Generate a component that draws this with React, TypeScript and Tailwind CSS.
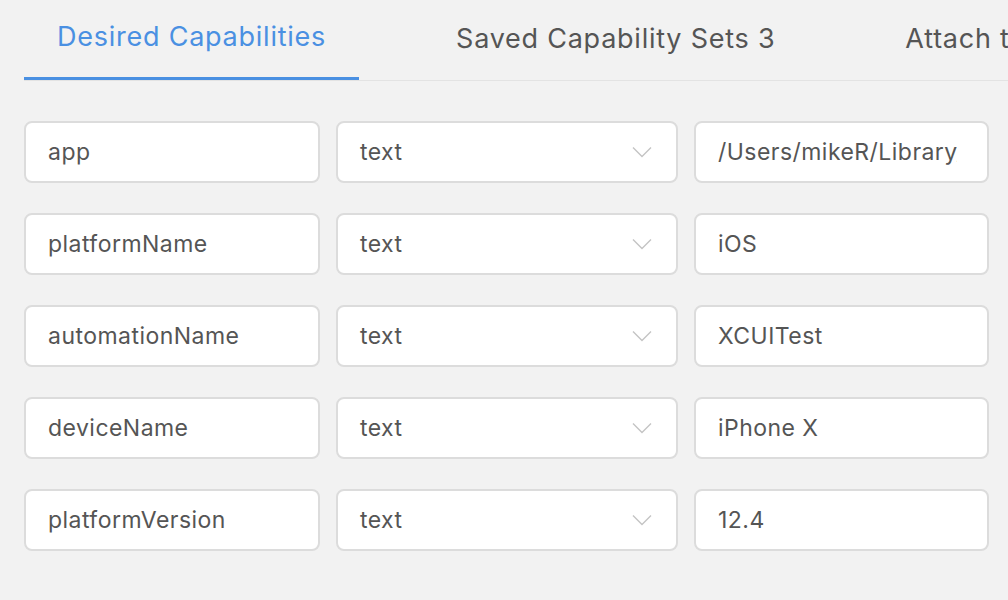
import React from "react";

const rows = [
  { name: "app", type: "text", value: "/Users/mikeR/Library/Developer/Xcode/DerivedData/TestApp.app" },
  { name: "platformName", type: "text", value: "iOS" },
  { name: "automationName", type: "text", value: "XCUITest" },
  { name: "deviceName", type: "text", value: "iPhone X" },
  { name: "platformVersion", type: "text", value: "12.4" },
];

const Chevron = () => (
  <svg width="20" height="12" viewBox="0 0 20 12" fill="none" className="shrink-0">
    <path d="M1 1.5L10 10.5L19 1.5" stroke="#c4c4c4" strokeWidth="1.4" />
  </svg>
);

const App = () => {
  return (
    <div
      className="w-[1008px] h-[600px] overflow-hidden bg-[#f2f2f2] text-[#555555]"
      style={{ fontFamily: "Inter, 'Open Sans', sans-serif" }}
    >
      <div className="ml-[24px] flex gap-[64px] border-b border-[#e3e3e3] whitespace-nowrap text-[27px] tracking-[0.028em]">
        <div className="px-[33px] h-[80px] flex items-center border-b-[3px] border-[#4a90e2] -mb-px text-[#4a90e2] pb-[2px]">
          Desired Capabilities
        </div>
        <div className="px-[33px] h-[80px] flex items-center pb-[2px]">
          Saved Capability Sets 3
        </div>
        <div className="px-[33px] h-[80px] flex items-center pb-[2px]">
          Attach to Session...
        </div>
      </div>

      <div className="ml-[24px] mt-[40px] flex flex-col gap-[30px]">
        {rows.map((r) => (
          <div key={r.name} className="flex gap-[16px] text-[23px] tracking-[0.02em]">
            <div className="w-[296px] h-[62px] bg-white border-2 border-[#dcdcdc] rounded-[8px] flex items-center pl-[22px]">
              {r.name}
            </div>
            <div className="w-[342px] h-[62px] bg-white border-2 border-[#dcdcdc] rounded-[8px] flex items-center justify-between pl-[22px] pr-[24px]">
              <span>{r.type}</span>
              <Chevron />
            </div>
            <div className="w-[295px] h-[62px] bg-white border-2 border-[#dcdcdc] rounded-[8px] flex items-center pl-[22px] pr-[30px] whitespace-nowrap">
              <span className="block overflow-hidden">{r.value}</span>
            </div>
          </div>
        ))}
      </div>
    </div>
  );
};

export default App;
